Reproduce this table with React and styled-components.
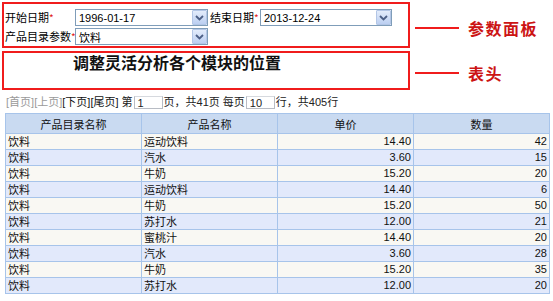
import React from "react";
import styled, { createGlobalStyle } from "styled-components";

const GlobalStyle = createGlobalStyle`
  html, body {
    margin: 0;
    padding: 0;
    background: #fff;
  }
  body {
    font-family: "Noto Sans CJK SC", "Liberation Sans", sans-serif;
    font-size: 11px;
    color: #000;
  }
`;

const Page = styled.div`
  width: 553px;
  height: 301px;
  overflow: hidden;
  padding: 2px 0 0 2px;
  box-sizing: border-box;
`;

const Section = styled.div`
  display: flex;
  align-items: center;
  margin-bottom: ${(p) => p.$gap || 0}px;
`;

const RedBox = styled.div`
  width: 408px;
  height: ${(p) => p.$height}px;
  box-sizing: border-box;
  border: 2px solid #f01c1c;
`;

const ParamGrid = styled.div`
  display: grid;
  grid-template-columns: 70px 133px 52px 132px;
  grid-auto-rows: 17px;
  row-gap: 2px;
  padding: 5px 0 0 1px;
  align-items: center;
`;

const Label = styled.span`
  font-size: 11px;
  white-space: nowrap;
  line-height: 17px;
  padding-left: ${(p) => p.$pad || 0}px;
  em {
    font-style: normal;
    color: #e02020;
    font-size: 10px;
    vertical-align: top;
  }
`;

const SelectBox = styled.div`
  height: 17px;
  box-sizing: border-box;
  border: 1px solid #7f9db9;
  background: #fff;
  display: flex;
  align-items: center;
  justify-content: space-between;
  padding-left: 3px;
  font-size: 11px;
  font-family: "Liberation Sans", "Noto Sans CJK SC", sans-serif;
`;

const ArrowButton = styled.span`
  width: 15px;
  height: 15px;
  box-sizing: border-box;
  border: 1px solid #b3c6e6;
  border-radius: 1px;
  background: linear-gradient(#e3ecfb, #bccff1);
  display: flex;
  align-items: center;
  justify-content: center;
`;

const Annotation = styled.div`
  display: flex;
  align-items: center;
  margin-left: 5px;
  margin-top: ${(p) => p.$shift || 0}px;
`;

const Line = styled.span`
  width: 44px;
  height: 2px;
  background: #f01c1c;
  margin-right: 9px;
`;

const NoteText = styled.span`
  color: #cc1414;
  font-weight: bold;
  font-size: 16px;
  letter-spacing: 1.5px;
`;

const HeaderTitle = styled.div`
  font-size: 16px;
  font-weight: bold;
  color: #111;
  line-height: 16px;
  padding: 1px 0 0 69px;
`;

const Pager = styled.div`
  display: flex;
  align-items: center;
  height: 14px;
  margin: 4px 0 5px 4px;
  font-size: 11px;
  font-family: "Liberation Sans", "Noto Sans CJK SC", sans-serif;
  color: #222;
  white-space: nowrap;
`;

const PagerLink = styled.span`
  color: ${(p) => (p.$disabled ? "#9a9a9a" : "#111")};
`;

const PageInput = styled.span`
  display: inline-block;
  width: 29px;
  height: 13px;
  box-sizing: border-box;
  border: 1px solid #b8bcc4;
  border-top-color: #d6d9de;
  background: #fff;
  font-size: 11px;
  line-height: 13px;
  padding-left: 3px;
  margin: 2px 1px 0;
`;

const Table = styled.table`
  border-collapse: collapse;
  width: 545px;
  margin-left: 3px;
  table-layout: fixed;
  font-size: 11px;
`;

const Th = styled.th`
  background: #c9daf1;
  border: 1px solid #a7c4ea;
  font-weight: normal;
  height: 19px;
  padding: 0;
  color: #111;
`;

const Row = styled.tr`
  background: ${(p) => (p.$alt ? "#e2e9fb" : "#f9f8f3")};
`;

const Td = styled.td`
  border: 1px solid #a7c4ea;
  height: 15px;
  padding: 0 2px;
  line-height: 15px;
  text-align: ${(p) => (p.$num ? "right" : "left")};
  font-family: ${(p) =>
    p.$num
      ? `"Liberation Sans", sans-serif`
      : `"Noto Sans CJK SC", sans-serif`};
  color: #111;
`;

const Chevron = () => (
  <svg width="9" height="6" viewBox="0 0 9 6">
    <path d="M1 1 L4.5 4.5 L8 1" fill="none" stroke="#4c5f86" strokeWidth="1.8" />
  </svg>
);

const Select = ({ value }) => (
  <SelectBox>
    <span>{value}</span>
    <ArrowButton>
      <Chevron />
    </ArrowButton>
  </SelectBox>
);

const rows = [
  ["饮料", "运动饮料", "14.40", "42"],
  ["饮料", "汽水", "3.60", "15"],
  ["饮料", "牛奶", "15.20", "20"],
  ["饮料", "运动饮料", "14.40", "6"],
  ["饮料", "牛奶", "15.20", "50"],
  ["饮料", "苏打水", "12.00", "21"],
  ["饮料", "蜜桃汁", "14.40", "20"],
  ["饮料", "汽水", "3.60", "28"],
  ["饮料", "牛奶", "15.20", "35"],
  ["饮料", "苏打水", "12.00", "20"],
];

const App = () => {
  return (
    <Page>
      <GlobalStyle />
      <Section $gap={3}>
        <RedBox $height={46}>
          <ParamGrid>
            <Label>
              开始日期<em>*</em>
            </Label>
            <Select value="1996-01-17" />
            <Label $pad={2}>
              结束日期<em>*</em>
            </Label>
            <Select value="2013-12-24" />
            <Label>
              产品目录参数<em>*</em>
            </Label>
            <Select value="饮料" />
          </ParamGrid>
        </RedBox>
        <Annotation $shift={6}>
          <Line />
          <NoteText>参数面板</NoteText>
        </Annotation>
      </Section>

      <Section>
        <RedBox $height={39}>
          <HeaderTitle>调整灵活分析各个模块的位置</HeaderTitle>
        </RedBox>
        <Annotation $shift={4}>
          <Line />
          <NoteText>表头</NoteText>
        </Annotation>
      </Section>

      <Pager>
        <PagerLink $disabled>[首页]</PagerLink>
        <PagerLink $disabled>[上页]</PagerLink>
        <PagerLink>[下页]</PagerLink>
        <PagerLink>[尾页]</PagerLink>
        <span>&nbsp;第</span>
        <PageInput>1</PageInput>
        <span>页，共41页 每页</span>
        <PageInput>10</PageInput>
        <span>行，共405行</span>
      </Pager>

      <Table>
        <thead>
          <tr>
            <Th>产品目录名称</Th>
            <Th>产品名称</Th>
            <Th>单价</Th>
            <Th>数量</Th>
          </tr>
        </thead>
        <tbody>
          {rows.map((r, i) => (
            <Row key={i} $alt={i % 2 === 1}>
              <Td>{r[0]}</Td>
              <Td>{r[1]}</Td>
              <Td $num>{r[2]}</Td>
              <Td $num>{r[3]}</Td>
            </Row>
          ))}
        </tbody>
      </Table>
    </Page>
  );
};

export default App;
